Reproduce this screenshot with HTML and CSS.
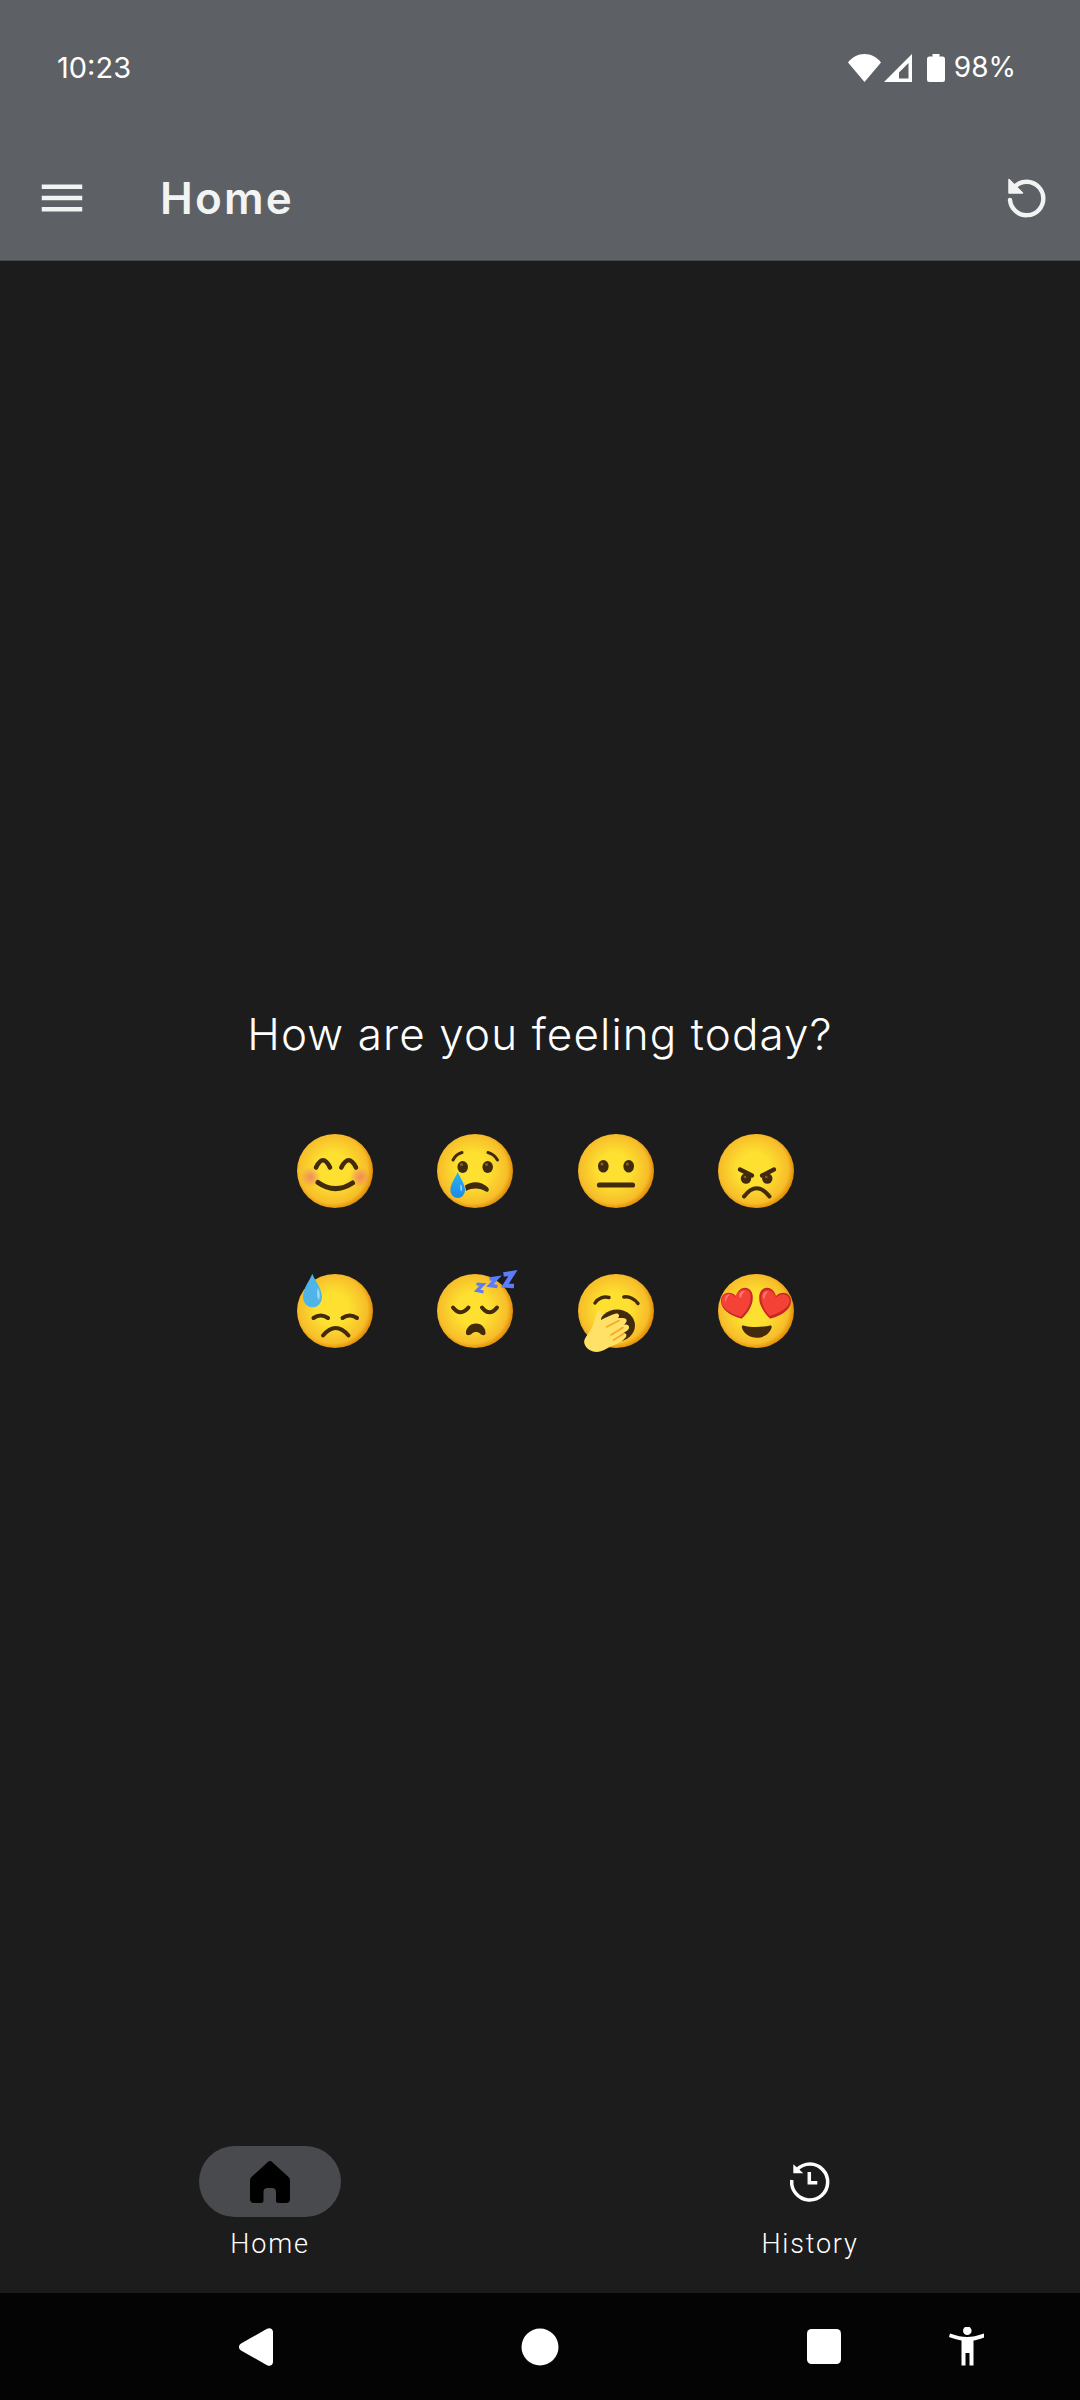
FILE: index.html
```html
<!DOCTYPE html>
<html lang="en">
<head>
    <meta charset="UTF-8">
    <meta name="viewport" content="width=device-width, initial-scale=1.0">
    <title>Home</title>
    <link rel="stylesheet" href="styles.css">
</head>
<body>
    <svg class="defs" aria-hidden="true">
        <defs>
            <radialGradient id="face" gradientUnits="userSpaceOnUse" cx="38" cy="38" r="41">
                <stop offset="0.4" stop-color="#fde030"/>
                <stop offset="0.84" stop-color="#f7bd2a"/>
                <stop offset="1" stop-color="#dd8400"/>
            </radialGradient>
            <radialGradient id="blush">
                <stop offset="0.1" stop-color="#ed7770" stop-opacity="0.7"/>
                <stop offset="1" stop-color="#ed7770" stop-opacity="0"/>
            </radialGradient>
            <linearGradient id="tear" x1="0" y1="0" x2="0" y2="1">
                <stop offset="0" stop-color="#29b6f6"/>
                <stop offset="1" stop-color="#1e88e5"/>
            </linearGradient>
            <symbol id="round" viewBox="0 0 80 80" overflow="visible">
                <ellipse cx="40" cy="40" rx="38" ry="37" fill="url(#face)"/>
            </symbol>
        </defs>
    </svg>

    <div class="app">
        <header class="topbar">
            <div class="status">
                <span class="clock">10:23</span>
                <div class="status-icons">
                    <svg class="wifi" viewBox="0 0 33 28"><path d="M16.500 28 0 8.500C4 3.200 10 0 16.500 0S29 3.200 33 8.500z"/></svg>
                    <svg class="signal" viewBox="0 0 28 28"><path fill-rule="evenodd" d="M28 0v28H0zM24.500 9 15 18.500v6h9.500z"/></svg>
                    <svg class="battery" viewBox="0 0 18 28"><path d="M5.500 0h7v2.500h3A2.500 2.500 0 0 1 18 5v20.500a2.500 2.500 0 0 1-2.500 2.500h-13A2.500 2.500 0 0 1 0 25.500V5a2.500 2.500 0 0 1 2.500-2.500h3z"/></svg>
                    <span class="percent">98%</span>
                </div>
            </div>
            <div class="toolbar">
                <svg class="menu-icon" viewBox="0 0 24 24"><path d="M3 18h18v-2H3zm0-5h18v-2H3zm0-7v2h18V6z"/></svg>
                <h1 class="title">Home</h1>
                <svg class="reset-icon" viewBox="0 0 40 40">
                    <path class="reset-arc" d="M3 22A16.700 16.700 0 1 0 20 3.800C15 3.800 11 5.500 8 8.500"/>
                    <path class="reset-head" d="M2 1.500V15H15.500z"/>
                </svg>
            </div>
        </header>

        <main class="content">
            <h2 class="question">How are you feeling today?</h2>
            <div class="moods">
                <svg class="emoji" viewBox="0 0 80 80">
                    <use href="#round" width="80" height="80"/>
                    <circle cx="15.700" cy="46" r="10" fill="url(#blush)"/>
                    <circle cx="65" cy="46" r="10" fill="url(#blush)"/>
                    <path class="ink" stroke-width="4.600" d="M21 36.500Q28 22 35 36.500M46.300 36.500Q53.700 22 61 36.500"/>
                    <path class="ink" stroke-width="5" d="M23 51.500Q40 63.500 57.500 52"/>
                </svg>
                <svg class="emoji" viewBox="0 0 80 80">
                    <use href="#round" width="80" height="80"/>
                    <path class="ink" stroke-width="3" d="M18 29Q21 23 27 21.500M53 21.500Q59 23 62.500 29"/>
                    <ellipse class="dot" cx="27.700" cy="36" rx="5.300" ry="6"/>
                    <ellipse class="dot" cx="52.700" cy="36" rx="5.300" ry="6"/>
                    <circle class="shine" cx="26.500" cy="33.500" r="1.500"/>
                    <circle class="shine" cx="51.500" cy="33.500" r="1.500"/>
                    <path class="dot" d="M30 54.500C36 50 46 49.500 53 56.500C55 59.500 53 61.500 51 60.500C45 57 38 56.500 31 60z"/>
                    <path fill="url(#tear)" d="M22.700 41C25 47 30 52 30 59.500A7.300 7.600 0 0 1 15.400 59.500C15.400 52 20.500 47 22.700 41z"/>
                    <path fill="#b3e5fc" opacity="0.8" d="M25.800 53C27 55 27.500 58 26.500 60.500C25 59.500 25 55 25.800 53z"/>
                </svg>
                <svg class="emoji" viewBox="0 0 80 80">
                    <use href="#round" width="80" height="80"/>
                    <ellipse class="dot" cx="27.300" cy="35.300" rx="5.300" ry="6.300"/>
                    <ellipse class="dot" cx="52.700" cy="35.300" rx="5.300" ry="6.300"/>
                    <circle class="shine" cx="26" cy="33" r="1.500"/>
                    <circle class="shine" cx="51.400" cy="33" r="1.500"/>
                    <path class="ink" stroke-width="5.200" d="M23.500 54H56.500"/>
                </svg>
                <svg class="emoji" viewBox="0 0 80 80">
                    <use href="#round" width="80" height="80"/>
                    <path class="ink" stroke-width="4.200" d="M24 38.500 36 44.500M58 38.500 46 44.500"/>
                    <circle class="dot" cx="30" cy="47.500" r="5.200"/>
                    <circle class="dot" cx="51.300" cy="47.500" r="5.200"/>
                    <circle class="shine" cx="29" cy="46" r="1.300"/>
                    <circle class="shine" cx="50.300" cy="46" r="1.300"/>
                    <path class="ink" stroke-width="4" d="M28 65.500Q40.700 49 53.500 65.500"/>
                </svg>

                <svg class="emoji" viewBox="0 0 80 80">
                    <use href="#round" width="80" height="80"/>
                    <path class="ink" stroke-width="4" d="M18.500 47Q25.700 42 33 47M47.500 47Q54.700 42 62 47"/>
                    <path class="ink" stroke-width="4" d="M28 64.500Q40.700 49.500 53.500 64.500"/>
                    <path fill="#4fb4e8" d="M17.300 2.700C20 10 27 17 27 26.500A9.500 9.800 0 0 1 8 26.500C8 17 14.500 10 17.300 2.700z"/>
                    <path fill="#a9dcf5" opacity="0.85" d="M23 17C25 20.500 25.500 25 24 29C21.500 27 21.500 21 23 17z"/>
                </svg>
                <svg class="emoji" viewBox="0 0 80 80">
                    <use href="#round" width="80" height="80"/>
                    <path class="ink" stroke-width="4" d="M18 36.500Q25.500 46 33.500 36.500M47 36.500Q54.500 46 62 36.500"/>
                    <path class="dot" d="M41 52.500C47 52.500 51 57.500 50.500 62.500C50 65 47 64.500 45 62.500C43 60.500 39 60.500 37 62.500C35 64.500 31.500 65 31 62.500C30.500 57.500 35 52.500 41 52.500z"/>
                    <path class="zzz" stroke-width="4.500" d="M68.500 3.500 78 2 70 14.500 79 15"/>
                    <path class="zzz" stroke-width="3.600" d="M54.500 8 62 7 55 14.500 62.500 15.500"/>
                    <path class="zzz" stroke-width="3.200" d="M41.500 13 48 13.500 42 19.500 48.500 21"/>
                </svg>
                <svg class="emoji" viewBox="0 0 80 80">
                    <use href="#round" width="80" height="80"/>
                    <path class="ink" stroke-width="3.400" d="M19 32C22 27 28 25 33 26.500M47.800 26C53 25 59 28 62 32.500"/>
                    <ellipse class="dot" cx="41" cy="54.500" rx="18" ry="16"/>
                    <path fill="#ffe168" d="M9 74C7 70 9 67 12 63C15 59 18 53 19.500 46L21.500 41C23 39 25.500 40 25.500 43L25 49C29 46.500 35 44 40 42.500C43 42 44 45 42 47C44.500 47 48.500 46.500 50 48C51.500 50 50 52 48 53.500C51 53 53.500 54 53 57C52.500 59 50 60.500 47.500 62C50 62 51 64 50 66C47 70 42 73 37 74.500C33 76 29 79 24 80.500C18 82 11 79 9 74z"/>
                    <path class="finger" d="M30.500 56 43 49.500M35 64 47 56.500M37.500 69 48 62.500"/>
                </svg>
                <svg class="emoji" viewBox="0 0 80 80">
                    <use href="#round" width="80" height="80"/>
                    <path class="dot" d="M27.300 54.500C34 56.500 47 56.500 54 54.500C55.500 54 56 55.500 55.500 57C53.500 63 47.500 66.700 40.700 66.700C34 66.700 28 63 26 57C25.500 55.500 26 54 27.300 54.500z"/>
                    <path fill="#c62828" d="M25.700 47.700C18 46 5 40 5 30C5 22 14 19 20 25C22 18 28 15 33 18C38 21 37.500 30 35 35C33 40 29 45 25.700 47.700z"/>
                    <path fill="#f44336" d="M25 45.500C18 44 5.500 38.500 5.500 30C5.500 23 14 20 19.500 26C22 19 28 17 32 19.500C36 22 35 30 33 34.500C31 39 28 43 25 45.500z"/>
                    <path fill="#c62828" d="M54.300 47.700C62 46 75 40 75 30C75 22 66 19 60 25C58 18 52 15 47 18C42 21 42.500 30 45 35C47 40 51 45 54.300 47.700z"/>
                    <path fill="#f44336" d="M54 45C60 43 73 38 73.500 30C74 24 66 21 60 26.500C58 20 51.500 17.500 48 20C44 23 45 30 47 34.500C49 39 51 42.500 54 45z"/>
                    <path fill="#ff8a80" opacity="0.8" d="M9.500 26C11 23.500 13 23 14 24C11.500 25 10 28 10 31C8.500 30.500 8.500 28 9.500 26zM24 22C26 20 28 19.500 29 20.500C27 21.500 25.500 24 25 27C23 26 23 24 24 22zM47.500 23C49 20.500 51 20 52 21C50 22 48.500 25 48.500 28C46.800 27.500 46.500 25 47.500 23z"/>
                </svg>
            </div>
        </main>

        <nav class="bottom-nav">
            <div class="nav-item">
                <div class="nav-pill">
                    <svg class="nav-icon home-icon" viewBox="0 0 40 42"><path d="M17.600 1.200a3.200 3.200 0 0 1 4.800 0L38.500 16a5 5 0 0 1 1.500 3.600V38a4 4 0 0 1-4 4h-7.500a2.500 2.500 0 0 1-2.500-2.500V31a4 4 0 0 0-4-4h-4.500a4 4 0 0 0-4 4v8.500a2.500 2.500 0 0 1-2.500 2.500H4a4 4 0 0 1-4-4V19.600A5 5 0 0 1 1.500 16z"/></svg>
                </div>
                <span class="nav-label">Home</span>
            </div>
            <div class="nav-item">
                <div class="nav-pill">
                    <svg class="nav-icon history-icon" viewBox="0 0 40 40">
                        <path class="history-line" d="M1.800 18A18 18 0 1 0 20 2C14 2 10 4.500 6.500 8"/>
                        <path class="history-head" d="M3.300 2.300V11.300H13.300z"/>
                        <path class="history-line" d="M19.300 10V20.700H27.300"/>
                    </svg>
                </div>
                <span class="nav-label">History</span>
            </div>
        </nav>

        <footer class="system-nav">
            <svg class="sys-icon sys-back" viewBox="0 0 34 38"><path d="M2 22.500a4 4 0 0 1 0-7L28 .8c3-1.600 6 .2 6 3.200v30c0 3-3 4.800-6 3.200z"/></svg>
            <svg class="sys-icon sys-home" viewBox="0 0 38 38"><circle cx="19" cy="19" r="18.500"/></svg>
            <svg class="sys-icon sys-recent" viewBox="0 0 34 35"><rect width="34" height="35" rx="4.500"/></svg>
            <svg class="sys-icon sys-access" viewBox="-1 0 36 39"><circle cx="18.300" cy="3.700" r="4.300"/><path d="M1 6.500C8 9 13 10 18 10S28 9 35 6.500L36 10C31 12 27 13 24.500 13.500V38.500H20.500V26H16.500V38.500H12.500V13.500C10 13 5 12 0 10z"/></svg>
        </footer>
    </div>
</body>
</html>
```

FILE: styles.css
```css
* {
    box-sizing: border-box;
}
html, body {
    margin: 0;
    padding: 0;
    height: 2400px;
    background-color: #1c1c1c;
}
.defs {
    display: block;
    width: 0;
    height: 0;
}
.app {
    display: flex;
    flex-direction: column;
    height: 2400px;
    font-family: 'Inter', sans-serif;
    color: #ffffff;
}
.topbar {
    height: 261px;
    background-color: #5d6064;
    border-bottom: 1px solid #46484b;
}
.status {
    display: flex;
    align-items: center;
    justify-content: space-between;
    height: 136px;
    padding: 0 64px 0 57px;
}
.clock, .percent {
    font-family: 'Inter', sans-serif;
    font-size: 29px;
    margin-bottom: 2px;
}
.status-icons {
    display: flex;
    align-items: center;
}
.status-icons svg {
    fill: #ffffff;
    height: 28px;
}
.wifi {
    width: 33px;
}
.signal {
    width: 28px;
    margin-left: 3px;
}
.battery {
    width: 18px;
    margin-left: 15px;
}
.percent {
    margin-left: 9px;
    font-size: 28px;
}
.toolbar {
    display: flex;
    align-items: center;
    height: 124px;
    padding: 0 33px 0 35px;
}
.menu-icon {
    width: 54px;
    height: 54px;
    fill: #f2f3f3;
}
.title {
    flex: 1;
    margin: 0 0 0 71px;
    font-size: 44px;
    font-weight: 600;
    letter-spacing: 2.200px;
    color: #f2f3f3;
}
.reset-icon {
    width: 40px;
    height: 40px;
    overflow: visible;
}
.reset-arc {
    fill: none;
    stroke: #f2f3f3;
    stroke-width: 4.400;
    stroke-linecap: round;
}
.reset-head {
    fill: #f2f3f3;
    stroke: #f2f3f3;
    stroke-width: 1.500;
    stroke-linejoin: round;
}
.content {
    flex: 1;
    display: flex;
    flex-direction: column;
    align-items: center;
    justify-content: center;
    padding-top: 10px;
}
.question {
    margin: 0 0 40px;
    font-size: 44px;
    font-weight: 300;
    letter-spacing: 1.100px;
    color: #ffffff;
}
.moods {
    display: grid;
    grid-template-columns: repeat(4, 140.500px);
    grid-auto-rows: 140px;
    justify-items: center;
    align-items: center;
    margin-left: 11px;
}
.emoji {
    width: 80px;
    height: 80px;
    overflow: visible;
}
.ink {
    fill: none;
    stroke: #422b0d;
    stroke-linecap: round;
}
.dot {
    fill: #422b0d;
}
.shine {
    fill: #896024;
}
.zzz {
    fill: none;
    stroke: #5c7cfa;
    stroke-linejoin: miter;
}
.finger {
    fill: none;
    stroke: #f5a623;
    stroke-width: 1.500;
    stroke-linecap: round;
}
.bottom-nav {
    display: grid;
    grid-template-columns: 1fr 1fr;
    height: 176px;
    padding-top: 29px;
    background-color: #1c1c1c;
}
.nav-item {
    display: flex;
    flex-direction: column;
    align-items: center;
}
.nav-pill {
    display: flex;
    align-items: center;
    justify-content: center;
    width: 142px;
    height: 71px;
    border-radius: 36px;
}
.nav-item:first-child .nav-pill {
    background-color: #494a4d;
}
.nav-icon {
    width: 40px;
    height: 42px;
}
.home-icon {
    fill: #000000;
}
.history-icon {
    height: 40px;
    fill: none;
    overflow: visible;
}
.history-line {
    fill: none;
    stroke: #ffffff;
    stroke-width: 3.500;
}
.history-head {
    fill: #ffffff;
}
.nav-label {
    margin-top: 11px;
    font-family: 'Roboto', sans-serif;
    font-size: 27px;
    font-weight: 300;
    letter-spacing: 1.800px;
    color: #ffffff;
}
.system-nav {
    display: grid;
    grid-template-columns: repeat(6, 142px);
    align-items: center;
    justify-items: center;
    height: 107px;
    padding-left: 185px;
    background-color: #040404;
}
.sys-icon {
    fill: #ffffff;
    grid-row: 1;
}
.sys-back {
    grid-column: 1;
    width: 34px;
    height: 38px;
}
.sys-home {
    grid-column: 3;
    width: 38px;
    height: 38px;
}
.sys-recent {
    grid-column: 5;
    width: 34px;
    height: 35px;
}
.sys-access {
    grid-column: 6;
    width: 36px;
    height: 39px;
}
```
